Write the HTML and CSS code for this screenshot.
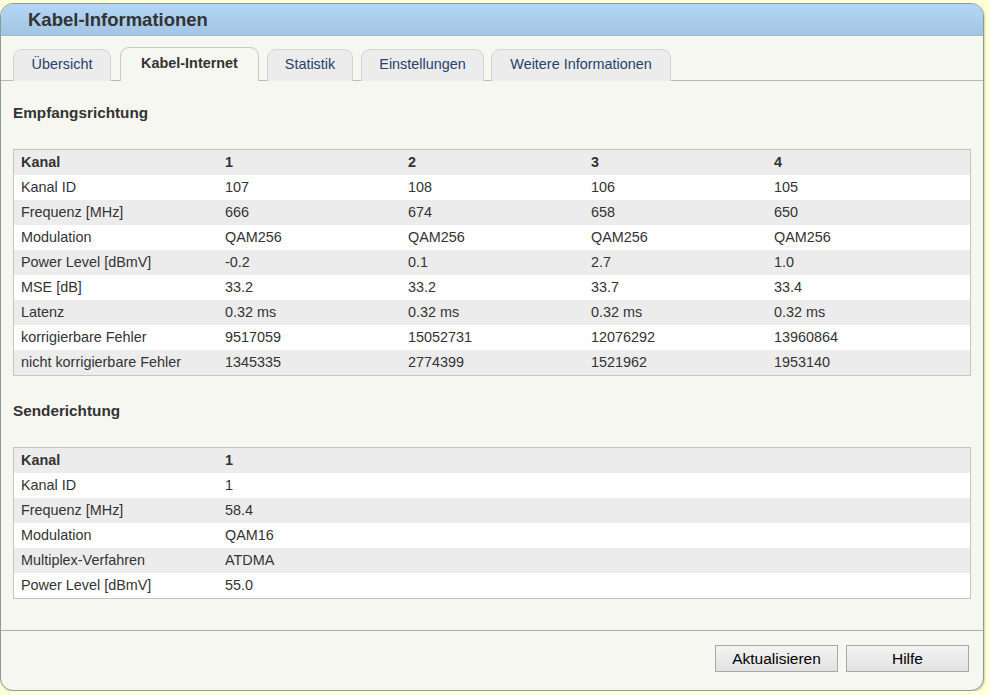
FILE: index.html
```html
<!DOCTYPE html>
<html lang="de">
<head>
<meta charset="utf-8">
<title>Kabel-Informationen</title>
<link rel="stylesheet" href="styles.css">
</head>
<body>
<div class="panel">
  <div class="header">Kabel-Informationen</div>
  <div class="tabs">
    <div class="tab t1">Übersicht</div>
    <div class="tab t2 active">Kabel-Internet</div>
    <div class="tab t3">Statistik</div>
    <div class="tab t4">Einstellungen</div>
    <div class="tab t5">Weitere Informationen</div>
  </div>
  <div class="content">
    <h2 class="section first">Empfangsrichtung</h2>
    <div class="table down">
      <div class="row head"><span>Kanal</span><span>1</span><span>2</span><span>3</span><span>4</span></div>
      <div class="row"><span>Kanal ID</span><span>107</span><span>108</span><span>106</span><span>105</span></div>
      <div class="row"><span>Frequenz [MHz]</span><span>666</span><span>674</span><span>658</span><span>650</span></div>
      <div class="row"><span>Modulation</span><span>QAM256</span><span>QAM256</span><span>QAM256</span><span>QAM256</span></div>
      <div class="row"><span>Power Level [dBmV]</span><span>-0.2</span><span>0.1</span><span>2.7</span><span>1.0</span></div>
      <div class="row"><span>MSE [dB]</span><span>33.2</span><span>33.2</span><span>33.7</span><span>33.4</span></div>
      <div class="row"><span>Latenz</span><span>0.32 ms</span><span>0.32 ms</span><span>0.32 ms</span><span>0.32 ms</span></div>
      <div class="row"><span>korrigierbare Fehler</span><span>9517059</span><span>15052731</span><span>12076292</span><span>13960864</span></div>
      <div class="row"><span>nicht korrigierbare Fehler</span><span>1345335</span><span>2774399</span><span>1521962</span><span>1953140</span></div>
    </div>
    <h2 class="section">Senderichtung</h2>
    <div class="table up">
      <div class="row head"><span>Kanal</span><span>1</span></div>
      <div class="row"><span>Kanal ID</span><span>1</span></div>
      <div class="row"><span>Frequenz [MHz]</span><span>58.4</span></div>
      <div class="row"><span>Modulation</span><span>QAM16</span></div>
      <div class="row"><span>Multiplex-Verfahren</span><span>ATDMA</span></div>
      <div class="row"><span>Power Level [dBmV]</span><span>55.0</span></div>
    </div>
  </div>
  <div class="footer">
    <button class="btn">Aktualisieren</button>
    <button class="btn">Hilfe</button>
  </div>
</div>
</body>
</html>
```
FILE: styles.css
```css
html, body {
  margin: 0;
  padding: 0;
  background: #ffffd9;
  font-family: "Liberation Sans", Arial, sans-serif;
  color: #333;
}
body {
  padding-top: 3px;
}
.panel {
  width: 982px;
  height: 686px;
  border: 1px solid #8d9d8d;
  border-radius: 13px;
  background: #f7f7f2;
  overflow: hidden;
  display: flex;
  flex-direction: column;
  box-shadow: 1px 1px 2px rgba(120,130,100,0.35);
}
.header {
  height: 31px;
  line-height: 32px;
  padding-left: 27px;
  font-size: 18.5px;
  font-weight: bold;
  color: #333;
  background: linear-gradient(#b3d6f6, #a3c5e3);
  border-bottom: 1px solid #9fb8cc;
}
.tabs {
  display: flex;
  padding: 12px 0 0 12px;
  border-bottom: 1px solid #b9bbb5;
  height: 32px;
}
.tab {
  height: 32px;
  line-height: 28px;
  text-align: center;
  font-size: 14.4px;
  color: #24426a;
  background: #ececec;
  border: 1px solid #d3d3d0;
  border-bottom: none;
  border-radius: 9px 9px 0 0;
  box-sizing: border-box;
  position: relative;
  top: 1px;
}
.t1 { width: 98px; }
.t2 { width: 139px; margin-left: 9px; }
.t3 { width: 86px; margin-left: 8px; }
.t4 { width: 123px; margin-left: 8px; }
.t5 { width: 180px; margin-left: 7px; }
.tab.active {
  background: #f7f7f2;
  color: #333;
  font-weight: bold;
  border-color: #c9cac5;
  height: 34px;
  top: 0;
  margin-top: -1px;
  line-height: 30px;
}
.content {
  padding: 0 12px 0 12px;
  flex: 1;
  border-bottom: 1px solid #a7b1a7;
}
.section {
  margin: 25px 0 26px;
  font-size: 15.3px;
  line-height: 20px;
  font-weight: bold;
  color: #333;
}
.section.first {
  margin-top: 22px;
}
.table {
  border: 1px solid #c6c6c0;
  width: 956px;
  font-size: 14.4px;
}
.row {
  display: grid;
  height: 25px;
  line-height: 25px;
  background: #ececec;
}
.row:nth-child(even) {
  background: #ffffff;
}
.down .row {
  grid-template-columns: 204px 183px 183px 183px 1fr;
}
.up .row {
  grid-template-columns: 204px 1fr;
}
.row span {
  padding-left: 7px;
  white-space: nowrap;
}
.row.head {
  font-weight: bold;
}
.footer {
  height: 59px;
  display: flex;
  justify-content: flex-end;
  align-items: flex-start;
  gap: 8px;
  padding: 14px 14px 0 0;
  box-sizing: border-box;
}
.btn {
  width: 123px;
  height: 27px;
  font-family: "Liberation Sans", Arial, sans-serif;
  font-size: 15.5px;
  color: #000;
  background: linear-gradient(#f3f3f3, #e2e2e2);
  border: 1px solid #a8a8a8;
  border-radius: 0;
  padding: 0;
}
```
